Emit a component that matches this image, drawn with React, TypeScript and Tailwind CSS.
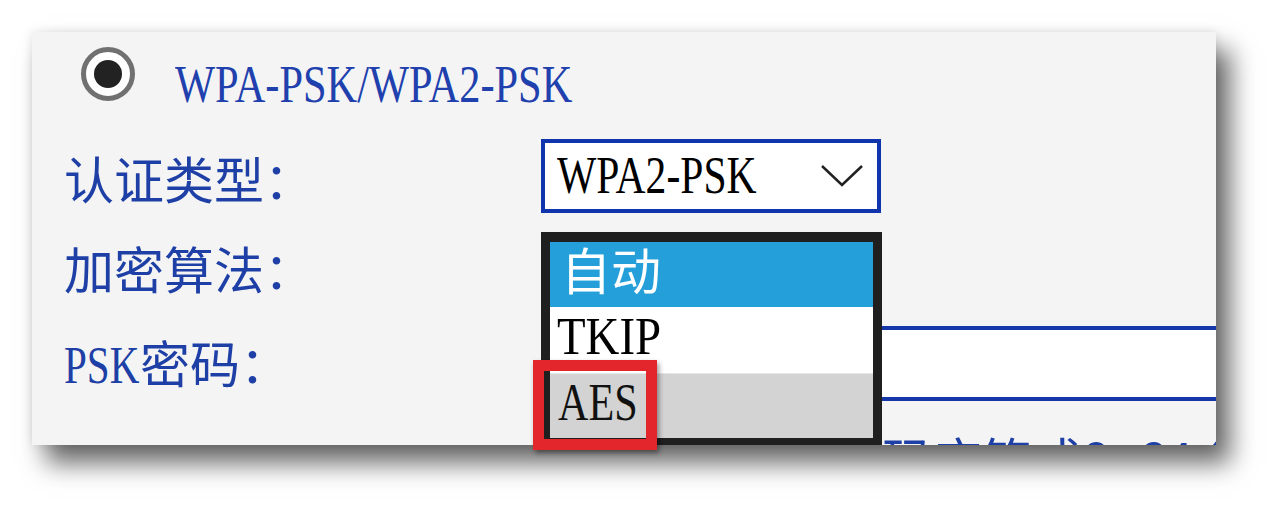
const cjk = "font-['Noto_Sans_CJK_SC',sans-serif]";
const latin = "font-['Liberation_Serif',serif]";

function Latin({ text, scale }: { text: string; scale: string }) {
  return (
    <span className={`inline-block whitespace-nowrap origin-left text-[52px] leading-none ${latin} ${scale}`}>
      {text}
    </span>
  );
}

function Radio() {
  return (
    <div className="w-[54px] h-[54px] shrink-0 rounded-full border-[5px] border-[#707070] bg-white flex items-center justify-center">
      <div className="w-[28px] h-[28px] rounded-full bg-[#222]" />
    </div>
  );
}

function Label({ children, mt }: { children: React.ReactNode; mt: string }) {
  return (
    <div className={`w-[509px] shrink-0 pl-[32px] ${mt} ${cjk} text-[50px] leading-none text-[#1d3fa6] whitespace-nowrap`}>
      {children}
    </div>
  );
}

function EncryptionList() {
  return (
    <div className="absolute top-0 left-0 z-10 w-[341px] border-[9px] border-t-[10px] border-b-[8px] border-[#1f1f1f]">
      <div className={`h-[65px] bg-[#249fda] text-white pl-[11px] pt-[1px] ${cjk} text-[50px] leading-none`}>自动</div>
      <div className="h-[66px] bg-white text-black pl-[7px] pt-[4px]">
        <Latin text="TKIP" scale="scale-x-[0.9]" />
      </div>
      <div className="h-[65px] bg-[#d3d3d3] text-[#111] pl-[8px] pt-[3px] border-t border-[#e6e6e6]">
        <Latin text="AES" scale="scale-x-[0.81]" />
      </div>
    </div>
  );
}

export default function App() {
  return (
    <div className="relative w-[1281px] h-[510px] overflow-hidden bg-white pt-[32px] pl-[32px]">
      <div className="w-[1184px] h-[413px] overflow-hidden bg-[#f4f4f4] flex flex-col shadow-[14px_18px_24px_rgba(0,0,0,0.6),0_0_10px_rgba(0,0,0,0.1)]">
        {/* mode */}
        <div className="flex items-start mt-[15px] ml-[49px]">
          <Radio />
          <div className="ml-[40px] mt-[12px] text-[#2040ae]">
            <Latin text="WPA-PSK/WPA2-PSK" scale="scale-x-[0.815]" />
          </div>
        </div>

        {/* auth type */}
        <div className="flex items-start mt-[28px]">
          <Label mt="mt-[13px]">认证类型：</Label>
          <div className="w-[340px] h-[74px] shrink-0 border-[4px] border-[#1034ac] bg-white flex items-center pl-[12px] pr-[14px]">
            <span className="text-black">
              <Latin text="WPA2-PSK" scale="scale-x-[0.8]" />
            </span>
            <svg className="ml-auto" width="42" height="22" viewBox="0 0 42 22" fill="none">
              <polyline points="1,1 21,20 41,1" stroke="#222" strokeWidth="2.5" />
            </svg>
          </div>
        </div>

        {/* encryption, open list */}
        <div className="flex items-start mt-[19px]">
          <Label mt="mt-[10px]">加密算法：</Label>
          <div className="relative w-[341px] h-[74px] shrink-0 bg-white">
            <EncryptionList />
          </div>
        </div>

        {/* psk */}
        <div className="flex items-start mt-[20px]">
          <Label mt="mt-[10px]">
            <span className="inline-block w-[76px]">
              <Latin text="PSK" scale="scale-x-[0.79]" />
            </span>
            密码：
          </Label>
          <div className="w-[720px] h-[75px] shrink-0 bg-white border-[4px] border-[#1537a8]" />
        </div>

        <div className={`mt-[32px] ml-[800px] ${cjk} text-[50px] leading-none text-[#1d3fa6] whitespace-nowrap`}>
          密码应符式8~64个字符
        </div>
      </div>

      {/* highlight */}
      <div className="absolute z-20 left-[533px] top-[360px] w-[124px] h-[90px] border-[11px] border-[#e3262c] shadow-[2px_3px_5px_rgba(0,0,0,0.4)]" />
    </div>
  );
}
